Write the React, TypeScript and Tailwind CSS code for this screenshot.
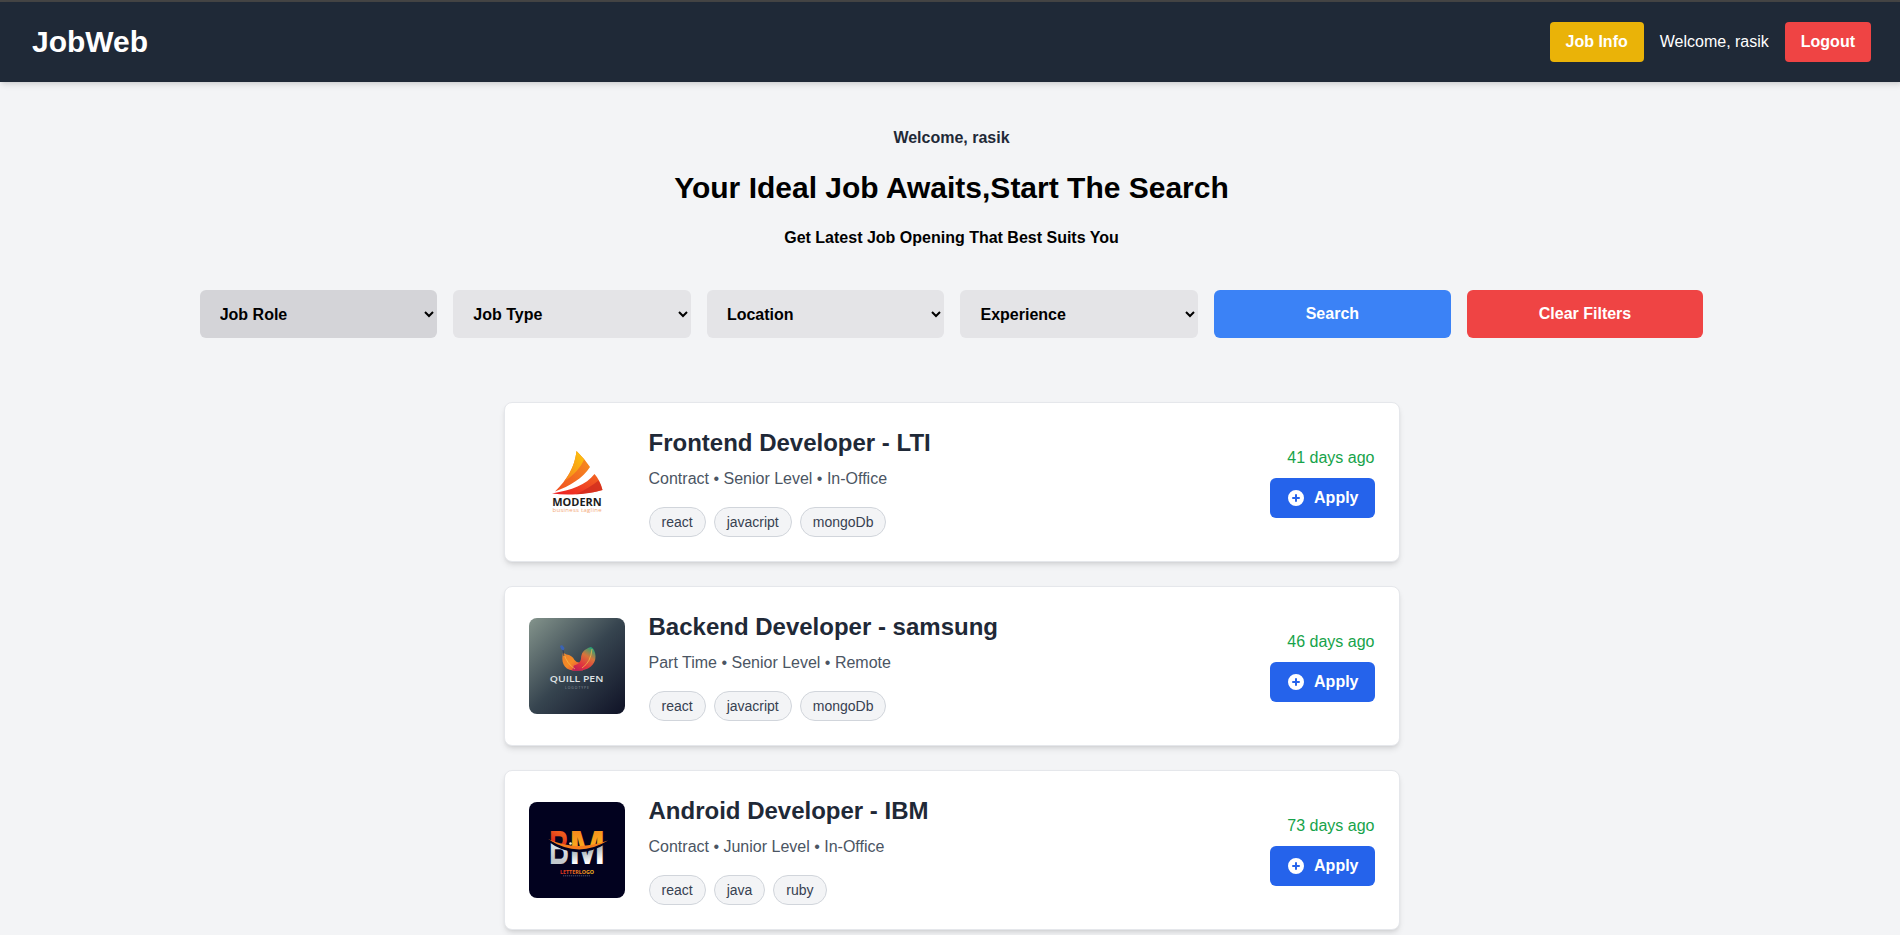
import React from "react";

function ModernLogo() {
  return (
    <svg viewBox="0 0 96 96" className="h-24 w-24 shrink-0 rounded-lg">
      <defs>
        <linearGradient id="sail" x1="0" y1="1" x2="1" y2="0">
          <stop offset="0" stopColor="#f04e23" />
          <stop offset="1" stopColor="#f7941e" />
        </linearGradient>
        <linearGradient id="sailTip" x1="0" y1="1" x2="1" y2="0">
          <stop offset="0" stopColor="#f58220" />
          <stop offset="1" stopColor="#fdc70c" />
        </linearGradient>
        <linearGradient id="hull" x1="0" y1="1" x2="1" y2="0">
          <stop offset="0" stopColor="#ed1c24" />
          <stop offset="1" stopColor="#f26a21" />
        </linearGradient>
      </defs>
      <rect width="96" height="96" fill="#fff" />
      <path d="M47.500 17C46 33 38 46 26 57.500C41 52 54 44 61 33Q55 24 47.500 17Z" fill="url(#sail)" />
      <path d="M47.500 17C46 29 42 38 35 47.500C45 41 52 33 55 25.500Q51.500 21 47.500 17Z" fill="url(#sailTip)" />
      <path d="M65.500 40C57 51 43 56 23 59.500C40 62 59 60 73.500 56Q71 46 65.500 40Z" fill="url(#hull)" />
      <path d="M73.500 56C65 58.500 56 60 47 60.300C56 56 64 51 69.500 46.500Q72 50 73.500 56Z" fill="#cf2b1e" opacity=".75" />
      <text x="23.200" y="71.500" fontSize="10.200" fontWeight="700" fontFamily="Open Sans, sans-serif" textLength="49.500" lengthAdjust="spacingAndGlyphs" fill="#1c1c1c">MODERN</text>
      <text x="23.500" y="78" fontSize="6" fontFamily="Open Sans, sans-serif" textLength="49" fill="#f3a878">business tagline</text>
    </svg>
  );
}

function QuillLogo() {
  return (
    <svg viewBox="0 0 96 96" className="h-24 w-24 shrink-0 rounded-lg">
      <defs>
        <linearGradient id="slate" x1="0" y1="0" x2="1" y2="1">
          <stop offset="0" stopColor="#84948c" />
          <stop offset=".5" stopColor="#36444f" />
          <stop offset="1" stopColor="#0f1226" />
        </linearGradient>
        <linearGradient id="featherLeft" x1="0" y1="0" x2="1" y2="1">
          <stop offset="0" stopColor="#e9802e" />
          <stop offset=".5" stopColor="#f58a25" />
          <stop offset="1" stopColor="#dc2f4b" />
        </linearGradient>
        <linearGradient id="featherRight" x1=".8" y1="0" x2=".2" y2="1">
          <stop offset="0" stopColor="#1fa37a" />
          <stop offset=".35" stopColor="#d9743a" />
          <stop offset=".7" stopColor="#e2353f" />
          <stop offset="1" stopColor="#c21f58" />
        </linearGradient>
      </defs>
      <rect width="96" height="96" fill="url(#slate)" />
      <path d="M34 34.500C32 43 34 51.500 44 52.500H54L51 44.500Q48 45 45.500 42Q43 37 37.500 36.500Z" fill="url(#featherLeft)" />
      <path d="M62 29C55 31 52 35 52 41Q51 46 45 47.500L43 52.500C57 54.500 67 48 66.500 38Q66 31 62 29Z" fill="url(#featherRight)" />
      <path d="M35 36Q38 46 46 51M63 31Q62 44 53 50" fill="none" stroke="#f9c14a" strokeWidth=".7" />
      <path d="M31 28L33 27L35.500 30L34.500 33L32 31Z" fill="#3b63b5" />
      <path d="M34 32L35 38" stroke="#2a3350" strokeWidth=".8" />
      <text x="20.800" y="63.800" fontSize="9" fontWeight="600" fontFamily="Open Sans, sans-serif" textLength="53.500" lengthAdjust="spacingAndGlyphs" fill="#dfe2e4">QUILL PEN</text>
      <text x="36" y="70.500" fontSize="3.400" fontFamily="Open Sans, sans-serif" textLength="24" fill="#8b949c">LOGOTYPE</text>
    </svg>
  );
}

function LetterLogo() {
  return (
    <svg viewBox="0 0 96 96" className="h-24 w-24 shrink-0 rounded-lg">
      <defs>
        <linearGradient id="fire" x1="0" y1="0" x2="1" y2="0">
          <stop offset="0" stopColor="#d8261c" />
          <stop offset=".5" stopColor="#f47a1c" />
          <stop offset="1" stopColor="#fbc51d" />
        </linearGradient>
        <radialGradient id="letterB" gradientUnits="userSpaceOnUse" cx="50" cy="-1" r="62.500">
          <stop offset="0" stopColor="#f37a1d" />
          <stop offset=".6" stopColor="#ee5a1c" />
          <stop offset=".79" stopColor="#d8261c" />
          <stop offset=".8" stopColor="#dfe3e5" />
          <stop offset="1" stopColor="#c3c9cd" />
        </radialGradient>
        <radialGradient id="letterM" gradientUnits="userSpaceOnUse" cx="50" cy="-1" r="62.500">
          <stop offset="0" stopColor="#fbc51d" />
          <stop offset=".5" stopColor="#f68a1c" />
          <stop offset=".79" stopColor="#fbb21d" />
          <stop offset=".8" stopColor="#aab4b8" />
          <stop offset="1" stopColor="#ffffff" />
        </radialGradient>
      </defs>
      <rect width="96" height="96" fill="#02021f" />
      <g fontSize="48" fontWeight="700" fontFamily="Liberation Sans, sans-serif">
        <text x="20" y="62" textLength="20" lengthAdjust="spacingAndGlyphs" fill="url(#letterB)">B</text>
        <text x="40" y="62" textLength="36.500" lengthAdjust="spacingAndGlyphs" fill="url(#letterM)">M</text>
      </g>
      <path d="M19 38.500Q47 60 79 39.500Q49 54 19 38.500Z" fill="#02021f" stroke="#02021f" strokeWidth="1.500" />
      <path d="M19 37Q47 50 79 38.500Q49 57 19 37Z" fill="#f57c1d" />
      <circle cx="41.500" cy="41.500" r="1.300" fill="#fff3c0" />
      <text x="31" y="72" fontSize="4.800" fontWeight="700" fontFamily="Open Sans, sans-serif" textLength="34" lengthAdjust="spacingAndGlyphs" fill="url(#fire)">LETTERLOGO</text>
      <path d="M34 73.800H61" stroke="#666a80" strokeWidth=".8" strokeDasharray="1.300 .7" />
    </svg>
  );
}

type Job = { title: string; meta: string; tags: string[]; age: string; logo: React.ReactNode };

const jobs: Job[] = [
  { title: "Frontend Developer - LTI", meta: "Contract • Senior Level • In-Office", tags: ["react", "javacript", "mongoDb"], age: "41 days ago", logo: <ModernLogo /> },
  { title: "Backend Developer - samsung", meta: "Part Time • Senior Level • Remote", tags: ["react", "javacript", "mongoDb"], age: "46 days ago", logo: <QuillLogo /> },
  { title: "Android Developer - IBM", meta: "Contract • Junior Level • In-Office", tags: ["react", "java", "ruby"], age: "73 days ago", logo: <LetterLogo /> },
];

function JobCard({ job }: { job: Job }) {
  return (
    <article className="flex items-center gap-6 rounded-lg border border-[#e5e7eb] bg-white p-6 shadow-md">
      {job.logo}
      <div className="flex-1">
        <h2 className="text-2xl font-bold text-[#1f2937]">{job.title}</h2>
        <p className="mt-2 text-base text-[#4b5563]">{job.meta}</p>
        <div className="mt-4 flex gap-2">
          {job.tags.map((tag) => (
            <span key={tag} className="rounded-full border border-[#d1d5db] bg-[#f3f4f6] px-3 py-1 text-sm text-[#374151]">{tag}</span>
          ))}
        </div>
      </div>
      <div className="flex flex-col items-end gap-2">
        <span className="text-[#16a34a]">{job.age}</span>
        <button className="flex h-10 items-center gap-2 rounded-md bg-[#2563eb] px-4 font-semibold text-white">
          <svg className="h-5 w-5" viewBox="0 0 20 20" fill="currentColor">
            <path fillRule="evenodd" clipRule="evenodd" d="M10 18a8 8 0 100-16 8 8 0 000 16zm1-11a1 1 0 10-2 0v2H7a1 1 0 100 2h2v2a1 1 0 102 0v-2h2a1 1 0 100-2h-2V7z" />
          </svg>
          Apply
        </button>
      </div>
    </article>
  );
}

export default function App() {
  return (
    <div className="h-[935px] w-full overflow-hidden bg-[#f3f4f6] font-['Liberation_Sans',Arial,sans-serif]">
      <div className="w-[1903px]">
        <div className="h-0.5 bg-[#444444]" />
        <header className="flex h-20 items-center justify-between bg-[#1f2937] px-8 text-white shadow-md">
          <div className="text-3xl font-bold">JobWeb</div>
          <nav className="flex items-center gap-4">
            <button className="h-10 rounded bg-[#eab308] px-4 font-bold">Job Info</button>
            <span>Welcome, rasik</span>
            <button className="h-10 rounded bg-[#ef4444] px-4 font-bold">Logout</button>
          </nav>
        </header>
        <main>
          <section className="flex flex-col items-center pt-11 text-center text-black">
            <p className="font-semibold text-[#1f2937]">Welcome, rasik</p>
            <h1 className="mt-5 text-3xl font-bold">Your Ideal Job Awaits,Start The Search</h1>
            <p className="mt-5 font-semibold">Get Latest Job Opening That Best Suits You</p>
          </section>
          <section className="mx-[199.7px] mt-10 grid h-12 grid-cols-[repeat(4,237.6px)_1fr_1fr] gap-4 font-semibold">
            <select className="rounded-md bg-[#d4d4d8] px-4 text-black"><option>Job Role</option></select>
            {["Job Type", "Location", "Experience"].map((name) => (
              <select key={name} className="rounded-md bg-[#e4e4e7] px-4 text-black"><option>{name}</option></select>
            ))}
            <button className="rounded-md bg-[#3b82f6] text-white">Search</button>
            <button className="rounded-md bg-[#ef4444] text-white">Clear Filters</button>
          </section>
          <section className="mx-auto mt-16 flex w-4xl flex-col gap-6">
            {jobs.map((job) => <JobCard key={job.title} job={job} />)}
          </section>
        </main>
      </div>
    </div>
  );
}
